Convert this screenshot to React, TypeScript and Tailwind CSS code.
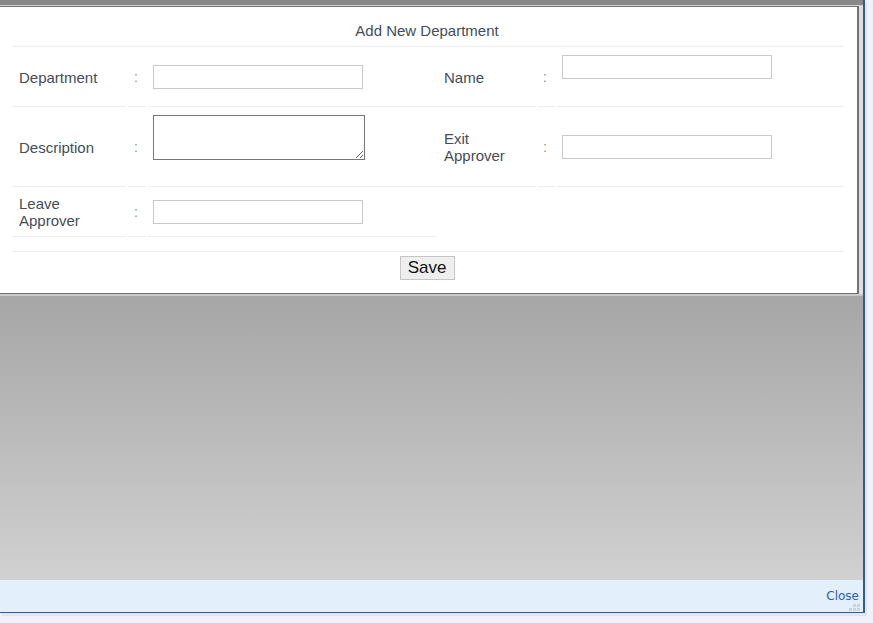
import React from 'react'

const font = { fontFamily: '"Liberation Sans", Arial, sans-serif' }

function Label({ text }: { text: React.ReactNode }) {
  return <span className="text-[15px] leading-[17px] text-[#454d57]">{text}</span>
}

function Colon() {
  return <span className="text-[14px] text-[#8a8f96]">:</span>
}

function TextInput() {
  return <input type="text" className="w-[210px] h-[24px] border border-[#c9c9c9] bg-white outline-none" />
}

export default function App() {
  return (
    <div className="w-[873px] h-[623px] bg-[#f1f1fb] overflow-hidden" style={font}>
      <div className="w-[865px] h-[613px] flex flex-col border-r-2 border-b border-[#2e5d8e] shadow-[2px_3px_0_#e4e4ee]">
        {/* content area */}
        <div className="h-[580px] flex flex-col">
          <div className="h-[5px] bg-[#888888]" />
          <div className="h-[1px] bg-[#d2d2d2]" />
          <div className="flex">
            <div className="w-[859px] h-[288px] bg-white border-y border-r-2 border-[#727272] flex flex-col pl-[12px] pr-[13px]">
              <div className="h-[40px] border-b border-[#eeeeee] flex items-end justify-center pb-[7px]">
                <span className="text-[15px] leading-[17px] text-[#454d57] -ml-[2px]">Add New Department</span>
              </div>

              <div className="flex gap-x-[1px]">
                {/* left table */}
                <div className="w-[425px] flex flex-col">
                  <div className="flex gap-x-[2px] h-[60px]">
                    <div className="w-[114px] border-b border-[#eeeeee] flex items-center pl-[7px] pt-[2px]"><Label text="Department" /></div>
                    <div className="w-[18px] border-b border-[#eeeeee] flex items-center pl-[6px] pt-[2px]"><Colon /></div>
                    <div className="flex-1 border-b border-[#eeeeee] flex items-center pl-[5px]"><TextInput /></div>
                  </div>
                  <div className="flex gap-x-[2px] h-[80px]">
                    <div className="w-[114px] border-b border-[#eeeeee] flex items-center pl-[7px] pt-[2px]"><Label text="Description" /></div>
                    <div className="w-[18px] border-b border-[#eeeeee] flex items-center pl-[6px] pt-[2px]"><Colon /></div>
                    <div className="flex-1 border-b border-[#eeeeee] pl-[5px] pt-[8px]">
                      <textarea className="block w-[212px] h-[45px] border border-[#767676] bg-white outline-none" />
                    </div>
                  </div>
                  <div className="flex gap-x-[2px] h-[50px]">
                    <div className="w-[114px] border-b border-[#eeeeee] flex items-center pl-[7px] pt-[1px]"><Label text={<>Leave<br />Approver</>} /></div>
                    <div className="w-[18px] border-b border-[#eeeeee] flex items-center pl-[6px] pt-[2px]"><Colon /></div>
                    <div className="flex-1 border-b border-[#eeeeee] flex items-center pl-[5px]"><TextInput /></div>
                  </div>
                </div>

                {/* right table */}
                <div className="flex-1 flex flex-col">
                  <div className="flex gap-x-[2px] h-[60px]">
                    <div className="w-[98px] border-b border-[#eeeeee] flex items-center pl-[6px] pt-[2px]"><Label text="Name" /></div>
                    <div className="w-[17px] border-b border-[#eeeeee] flex items-center pl-[5px] pt-[2px]"><Colon /></div>
                    <div className="flex-1 border-b border-[#eeeeee] pl-[5px] pt-[8px]"><TextInput /></div>
                  </div>
                  <div className="flex gap-x-[2px] h-[80px]">
                    <div className="w-[98px] border-b border-[#eeeeee] flex items-center pl-[6px] pt-[1px]"><Label text={<>Exit<br />Approver</>} /></div>
                    <div className="w-[17px] border-b border-[#eeeeee] flex items-center pl-[5px] pt-[2px]"><Colon /></div>
                    <div className="flex-1 border-b border-[#eeeeee] flex items-center pl-[5px]"><TextInput /></div>
                  </div>
                </div>
              </div>

              <div className="h-[14px]" />
              <div className="border-t border-[#eeeeee] flex justify-center pt-[4px]">
                <button className="w-[55px] h-[24px] bg-[#efefef] border border-[#c6c6c6] text-[17px] leading-[20px] text-[#111] -ml-[2px]">
                  Save
                </button>
              </div>
            </div>
            <div className="w-[4px] bg-[#dedede]" />
          </div>
          <div className="h-[2px] bg-[#c8c8c8]" />
          <div className="flex-1 bg-gradient-to-b from-[#a6a6a6] to-[#d1d1d1]" />
        </div>

        {/* footer */}
        <div className="relative flex-1 bg-[#e3effb] flex items-center justify-end pr-[4px]">
          <span className="text-[12px] text-[#2a60ad]" style={{ fontFamily: '"DejaVu Sans", sans-serif' }}>Close</span>
          <div className="absolute right-[3px] bottom-[1px] grid grid-cols-3 gap-[1px]">
            <span className="w-[3px] h-[3px]" />
            <span className="w-[3px] h-[3px] bg-[#c9d3dd]" />
            <span className="w-[3px] h-[3px] bg-[#c9d3dd]" />
            <span className="w-[3px] h-[3px] bg-[#c9d3dd]" />
            <span className="w-[3px] h-[3px] bg-[#c9d3dd]" />
            <span className="w-[3px] h-[3px] bg-[#c9d3dd]" />
          </div>
        </div>
      </div>
    </div>
  )
}
